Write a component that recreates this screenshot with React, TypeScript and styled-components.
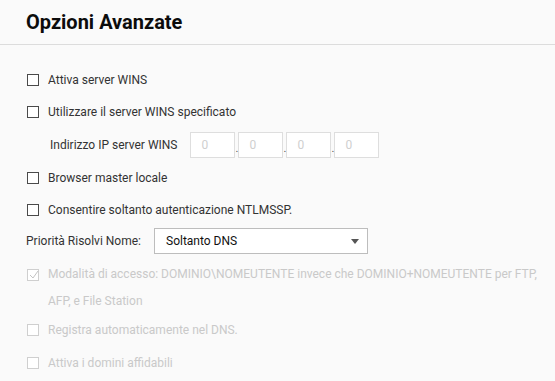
import React from 'react'
import styled, { createGlobalStyle } from 'styled-components'

const GlobalStyle = createGlobalStyle`
    html, body {
        margin: 0;
        padding: 0;
        background: #fafafa;
        font-family: Roboto, "Liberation Sans", Arial, sans-serif;
    }
`

const Page = styled.div`
    width: 555px;
    height: 381px;
    background: #fafafa;
    overflow: hidden;
`

const Header = styled.header`
    height: 44px;
    border-bottom: 1px solid #dcdcdc;
    padding-left: 26px;
    display: flex;
    align-items: center;
`

const Title = styled.h1`
    margin: 0;
    font-size: 20px;
    font-weight: 700;
    color: #0c0c0c;
`

const Body = styled.div`
    padding: 19px 8px 0 26px;
    font-size: 12px;
    color: #333;
`

const Row = styled.div<{ $indent?: number; $h?: number }>`
    display: flex;
    align-items: center;
    min-height: ${(p) => p.$h ?? 32}px;
    padding-left: ${(p) => p.$indent ?? 0}px;
`

const CheckRow = styled.label<{ $disabled?: boolean; $pad?: number }>`
    display: flex;
    align-items: flex-start;
    padding: ${(p) => p.$pad ?? 9}px 0 0 1px;
    min-height: 23px;
    line-height: 14px;
    color: ${(p) => (p.$disabled ? '#c9c9c9' : '#333')};
`

const MultiRow = styled(CheckRow)`
    padding-top: 0;
    margin-top: 5px;
    line-height: 27px;
    min-height: 54px;
`

const Box = styled.span<{ $disabled?: boolean; $top?: number }>`
    flex: none;
    width: 12px;
    height: 12px;
    box-sizing: border-box;
    border: 1px solid ${(p) => (p.$disabled ? '#cfcfcf' : '#4a4a4a')};
    background: #fff;
    margin-top: ${(p) => p.$top ?? 1}px;
    margin-right: 9px;
    position: relative;
`

const Tick = styled.svg`
    position: absolute;
    left: 1px;
    top: 0px;
`

const Label = styled.span``

const IpLabel = styled.span`
    margin-right: 13px;
`

const IpBox = styled.div`
    width: 45px;
    height: 26px;
    box-sizing: border-box;
    border: 1px solid #dedede;
    background: #fff;
    color: #cfcfcf;
    padding-left: 10px;
    display: flex;
    align-items: center;
`

const Dot = styled.span`
    width: 3px;
    text-align: center;
    align-self: flex-end;
    padding-bottom: 6px;
    color: #555;
    font-size: 11px;
`

const FieldLabel = styled.span`
    width: 128px;
`

const Select = styled.div`
    width: 214px;
    height: 26px;
    box-sizing: border-box;
    border: 1px solid #bdbdbd;
    background: #fff;
    display: flex;
    align-items: center;
    justify-content: space-between;
    padding: 0 8px 0 11px;
    color: #111;
    font-size: 12px;
`

const Caret = styled.span`
    width: 0;
    height: 0;
    border-left: 4px solid transparent;
    border-right: 4px solid transparent;
    border-top: 5px solid #555;
`

function TickMark() {
    return (
        <Tick width="10" height="10" viewBox="0 0 10 10">
            <path d="M1 5 L4 8 L9 1" fill="none" stroke="#c4c4c4" strokeWidth="1" />
        </Tick>
    )
}

function Check({ text, disabled, pad }: { text: string; disabled?: boolean; pad?: number }) {
    return (
        <CheckRow $disabled={disabled} $pad={pad}>
            <Box $disabled={disabled} />
            <Label>{text}</Label>
        </CheckRow>
    )
}

export default function App() {
    return (
        <Page>
            <GlobalStyle />
            <Header>
                <Title>Opzioni Avanzate</Title>
            </Header>
            <Body>
                <Check text="Attiva server WINS" />
                <Check text="Utilizzare il server WINS specificato" />
                <Row $indent={24} $h={33}>
                    <IpLabel>Indirizzo IP server WINS</IpLabel>
                    <IpBox>0</IpBox>
                    <Dot>.</Dot>
                    <IpBox>0</IpBox>
                    <Dot>.</Dot>
                    <IpBox>0</IpBox>
                    <Dot>.</Dot>
                    <IpBox>0</IpBox>
                </Row>
                <Check text="Browser master locale" pad={10} />
                <Check text="Consentire soltanto autenticazione NTLMSSP." />
                <Row $h={30}>
                    <FieldLabel>Priorità Risolvi Nome:</FieldLabel>
                    <Select>
                        <span>Soltanto DNS</span>
                        <Caret />
                    </Select>
                </Row>
                <MultiRow $disabled>
                    <Box $disabled $top={8}>
                        <TickMark />
                    </Box>
                    <Label>
                        Modalità di accesso: DOMINIO\NOMEUTENTE invece che DOMINIO+NOMEUTENTE per FTP, AFP, e File Station
                    </Label>
                </MultiRow>
                <Check text="Registra automaticamente nel DNS." disabled pad={8} />
                <Check text="Attiva i domini affidabili" disabled pad={10} />
            </Body>
        </Page>
    )
}
